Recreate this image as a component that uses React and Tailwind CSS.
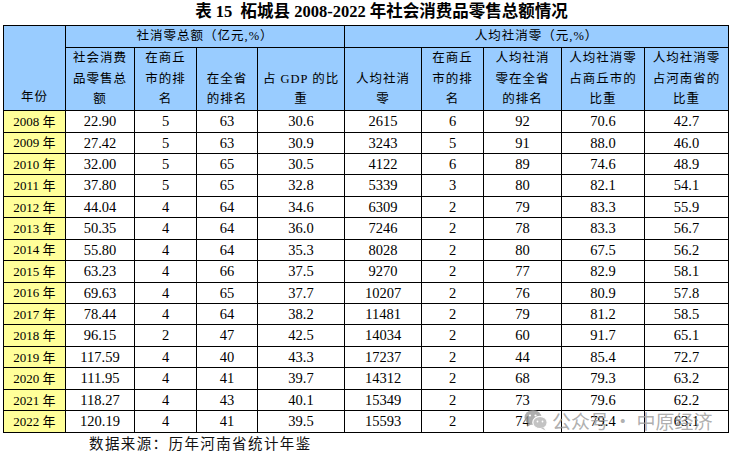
import React from "react";

const rows = [
  ["2008", "22.90", "5", "63", "30.6", "2615", "6", "92", "70.6", "42.7"],
  ["2009", "27.42", "5", "63", "30.9", "3243", "5", "91", "88.0", "46.0"],
  ["2010", "32.00", "5", "65", "30.5", "4122", "6", "89", "74.6", "48.9"],
  ["2011", "37.80", "5", "65", "32.8", "5339", "3", "80", "82.1", "54.1"],
  ["2012", "44.04", "4", "64", "34.6", "6309", "2", "79", "83.3", "55.9"],
  ["2013", "50.35", "4", "64", "36.0", "7246", "2", "78", "83.3", "56.7"],
  ["2014", "55.80", "4", "64", "35.3", "8028", "2", "80", "67.5", "56.2"],
  ["2015", "63.23", "4", "66", "37.5", "9270", "2", "77", "82.9", "58.1"],
  ["2016", "69.63", "4", "65", "37.7", "10207", "2", "76", "80.9", "57.8"],
  ["2017", "78.44", "4", "64", "38.2", "11481", "2", "79", "81.2", "58.5"],
  ["2018", "96.15", "2", "47", "42.5", "14034", "2", "60", "91.7", "65.1"],
  ["2019", "117.59", "4", "40", "43.3", "17237", "2", "44", "85.4", "72.7"],
  ["2020", "111.95", "4", "41", "39.7", "14312", "2", "68", "79.3", "63.2"],
  ["2021", "118.27", "4", "43", "40.1", "15349", "2", "73", "79.6", "62.2"],
  ["2022", "120.19", "4", "41", "39.5", "15593", "2", "74", "79.4", "63.1"],
];

const widths = [62, 69, 62, 61, 87, 77, 62, 78, 83, 84];

const th =
  "border border-black bg-[#99ccff] p-0 font-normal align-bottom text-[12.5px] leading-[20.7px] tracking-[1px] pb-0";

function Header2({ children }) {
  return <th className={th}>{children}</th>;
}

function WeChatIcon() {
  return (
    <svg width="24" height="22" viewBox="0 0 24 22" className="opacity-80">
      <ellipse cx="9" cy="8.5" rx="8.5" ry="7.5" fill="#9a9a9a" />
      <path d="M4 14 L3 18 L7.5 15.2 Z" fill="#9a9a9a" />
      <ellipse cx="16" cy="13.5" rx="7.2" ry="6.2" fill="#b5b5b5" stroke="#fff" strokeWidth="1.2" />
      <path d="M19.5 18.5 L21.5 21.5 L17 19.3 Z" fill="#b5b5b5" />
      <circle cx="6" cy="6.5" r="1.1" fill="#fff" />
      <circle cx="11.5" cy="6.5" r="1.1" fill="#fff" />
      <circle cx="13.5" cy="12.5" r="0.9" fill="#fff" />
      <circle cx="18.5" cy="12.5" r="0.9" fill="#fff" />
    </svg>
  );
}

export default function App() {
  return (
    <div
      className="relative w-[737px] h-[453px] bg-white text-black overflow-hidden"
      style={{ fontFamily: '"Liberation Serif", "Noto Sans CJK SC", serif' }}
    >
      <div className="h-[25px] flex items-center justify-center pl-[26px] text-[16.5px] font-bold leading-none">
        表 15&nbsp; 柘城县 2008-2022 年社会消费品零售总额情况
      </div>
      <table className="ml-[3px] border-collapse table-fixed w-[725px] text-center">
        <colgroup>
          {widths.map((w, i) => (
            <col key={i} style={{ width: w }} />
          ))}
        </colgroup>
        <thead>
          <tr className="h-[22px]">
            <th rowSpan={2} className={th + " pb-[2px]"}>
              年份
            </th>
            <th colSpan={4} className="border border-black bg-[#99ccff] p-0 font-normal align-middle text-[12.5px] tracking-[1px]">
              社消零总额（亿元,%）
            </th>
            <th colSpan={5} className="border border-black bg-[#99ccff] p-0 font-normal align-middle text-[12.5px] tracking-[1px]">
              人均社消零（元,%）
            </th>
          </tr>
          <tr className="h-[63px]">
            <Header2>
              社会消费
              <br />
              品零售总
              <br />额
            </Header2>
            <Header2>
              在商丘
              <br />
              市的排
              <br />名
            </Header2>
            <Header2>
              在全省
              <br />
              的排名
            </Header2>
            <Header2>
              占 GDP 的比
              <br />重
            </Header2>
            <Header2>
              人均社消
              <br />零
            </Header2>
            <Header2>
              在商丘
              <br />
              市的排
              <br />名
            </Header2>
            <Header2>
              人均社消
              <br />
              零在全省
              <br />
              的排名
            </Header2>
            <Header2>
              人均社消零
              <br />
              占商丘市的
              <br />
              比重
            </Header2>
            <Header2>
              人均社消零
              <br />
              占河南省的
              <br />
              比重
            </Header2>
          </tr>
        </thead>
        <tbody>
          {rows.map((r) => (
            <tr key={r[0]} className="h-[21.45px]">
              <td className="border border-black bg-[#ffff99] p-0 text-[13px] leading-none align-middle">
                {r[0]} 年
              </td>
              {r.slice(1).map((v, i) => (
                <td
                  key={i}
                  className="border border-black p-0 text-[14.5px] leading-none align-middle"
                >
                  {v}
                </td>
              ))}
            </tr>
          ))}
        </tbody>
      </table>
      <div className="pl-[89px] pt-[2px] text-[14.5px] leading-[18px] tracking-[1.4px] text-[#111]">
        数据来源：历年河南省统计年鉴
      </div>
      <div
        className="absolute left-[524px] top-[409px] flex items-center gap-[4px] text-[19px] leading-none text-[#9a9a9a]/80"
        style={{ fontFamily: '"Noto Sans CJK SC", sans-serif' }}
      >
        <WeChatIcon />
        <span>公众号 · 中原经济</span>
      </div>
    </div>
  );
}
